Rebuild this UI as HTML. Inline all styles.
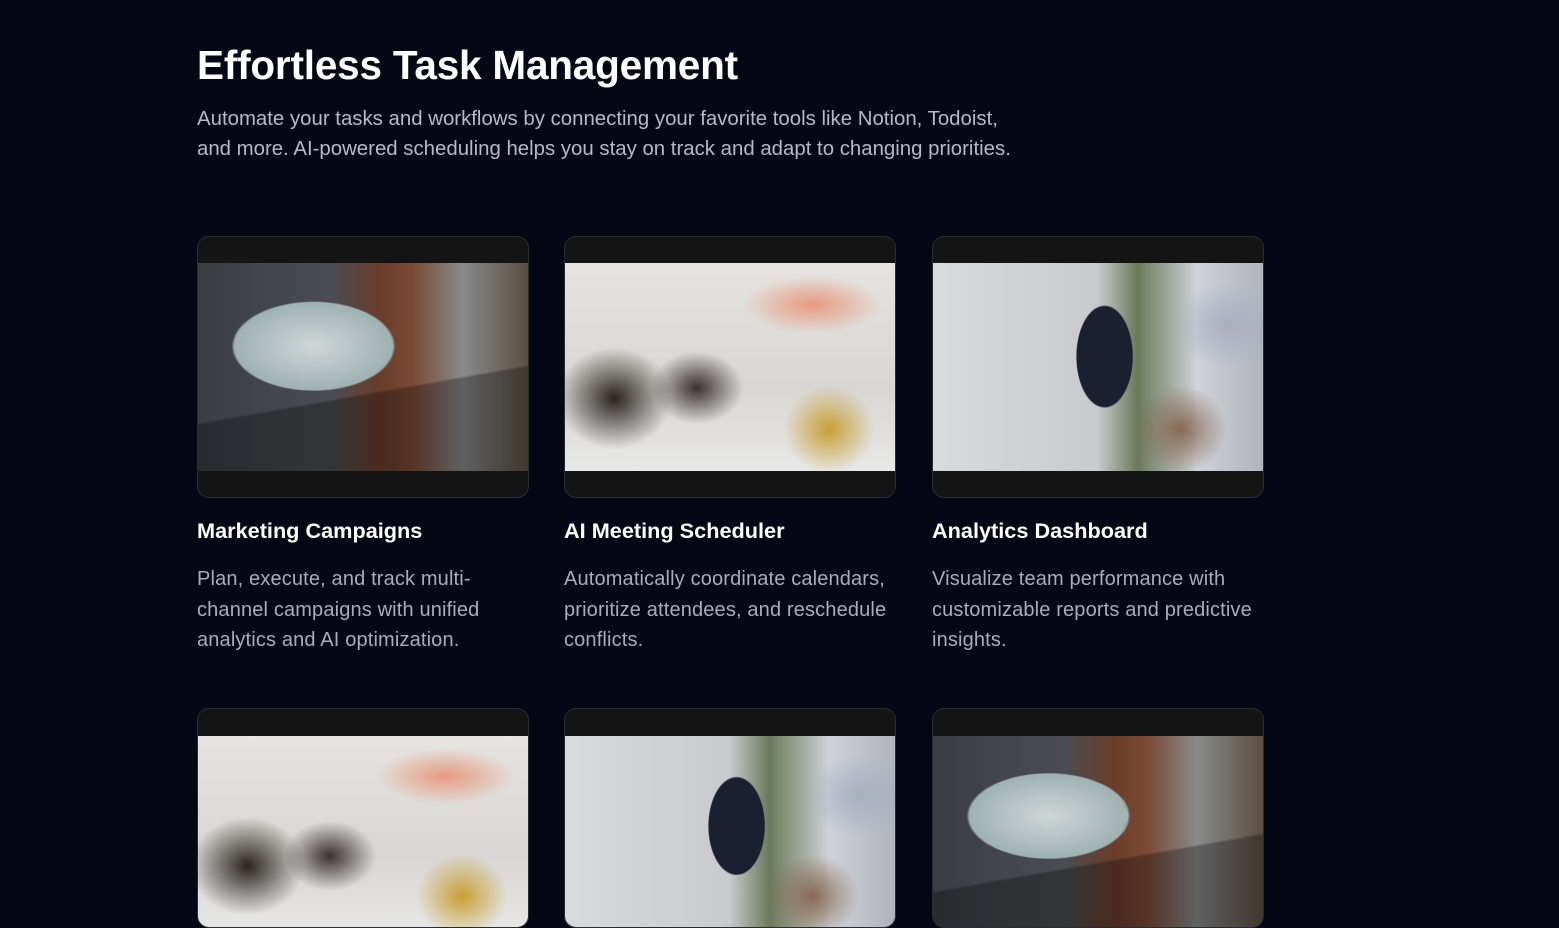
<!DOCTYPE html>
<html><head><style>
*{margin:0;padding:0;box-sizing:border-box}
body{width:1559px;height:894px;overflow:hidden;background:#050814;font-family:"Liberation Sans",sans-serif;color:#fff;position:relative}
h1{position:absolute;left:197px;top:42px;font-size:40.5px;font-weight:700;letter-spacing:-0.2px;white-space:nowrap}
.lead{position:absolute;left:197px;top:104px;font-size:20.4px;line-height:30px;color:#b6bac4;white-space:nowrap}
.card{position:absolute;width:332px;height:262px;border:1px solid #2a2c31;border-radius:12px;background:#141414;overflow:hidden}
.img{position:absolute;left:0;right:0;top:26px;height:208px}
.t{position:absolute;font-size:21.7px;font-weight:700;top:518px;white-space:nowrap}
.d{position:absolute;font-size:20px;letter-spacing:0.15px;line-height:30.5px;color:#a9adb6;top:564px;white-space:nowrap}
.laptop{background:
 linear-gradient(170deg,transparent 60%,rgba(0,0,0,.3) 61%),
 radial-gradient(ellipse 40% 35% at 35% 40%,#cfd6d8 0%,#9fb2b2 60%,transparent 62%),
 linear-gradient(90deg,#3a3d44 0%,#4a4c52 40%,#6a3c2a 55%,#7a4a35 65%,#888a8c 80%,#5a4f40 100%)}
.meet{background:
 radial-gradient(ellipse 20% 30% at 80% 80%,#c9a035 0%,transparent 70%),
 radial-gradient(ellipse 25% 35% at 15% 65%,#2a2420 0%,transparent 70%),
 radial-gradient(ellipse 20% 25% at 40% 60%,#3a3230 0%,transparent 70%),
 radial-gradient(ellipse 30% 20% at 75% 20%,#e89a80 0%,transparent 70%),
 linear-gradient(180deg,#e6e4e0 0%,#d8d6d2 60%,#e8e8e8 100%)}
.ana{background:
 radial-gradient(ellipse 14% 40% at 52% 45%,#1a2030 0%,#1a2030 60%,transparent 62%),
 radial-gradient(ellipse 20% 30% at 75% 80%,#8a6a55 0%,transparent 70%),
 radial-gradient(ellipse 25% 30% at 90% 30%,#a8b0c0 0%,transparent 70%),
 linear-gradient(90deg,#d8dadd 0%,#c8cace 50%,#6a7a5a 62%,#cfd2d8 80%,#b0b4ba 100%)}
</style></head><body>
<h1>Effortless Task Management</h1>
<p class="lead">Automate your tasks and workflows by connecting your favorite tools like Notion, Todoist,<br>and more. AI-powered scheduling helps you stay on track and adapt to changing priorities.</p>

<div class="card" style="left:197px;top:236px"><div class="img laptop"></div></div>
<div class="card" style="left:564px;top:236px"><div class="img meet"></div></div>
<div class="card" style="left:932px;top:236px"><div class="img ana"></div></div>

<div class="t" style="left:197px">Marketing Campaigns</div>
<div class="t" style="left:564px">AI Meeting Scheduler</div>
<div class="t" style="left:932px">Analytics Dashboard</div>
<div class="d" style="left:197px">Plan, execute, and track multi-<br>channel campaigns with unified<br>analytics and AI optimization.</div>
<div class="d" style="left:564px">Automatically coordinate calendars,<br>prioritize attendees, and reschedule<br>conflicts.</div>
<div class="d" style="left:932px">Visualize team performance with<br>customizable reports and predictive<br>insights.</div>

<div class="card" style="left:197px;top:708px;height:220px"><div class="img meet" style="top:27px;height:200px"></div></div>
<div class="card" style="left:564px;top:708px;height:220px"><div class="img ana" style="top:27px;height:200px"></div></div>
<div class="card" style="left:932px;top:708px;height:220px"><div class="img laptop" style="top:27px;height:200px"></div></div>
</body></html>
